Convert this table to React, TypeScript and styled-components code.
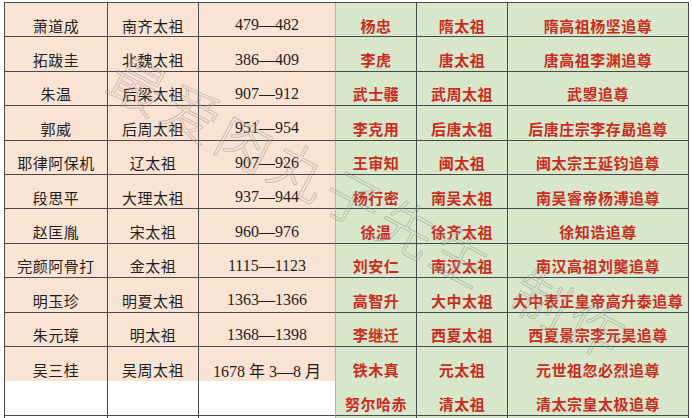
import styled, { createGlobalStyle } from "styled-components";

const GlobalStyle = createGlobalStyle`
  html, body {
    margin: 0;
    padding: 0;
    background: #ffffff;
    overflow: hidden;
  }
`;

interface Row {
  name: string;
  title: string;
  years: string;
  honorName: string;
  honorTitle: string;
  note: string;
}

const rows: (Row | null)[] = [
  { name: "萧道成", title: "南齐太祖", years: "479—482", honorName: "杨忠", honorTitle: "隋太祖", note: "隋高祖杨坚追尊" },
  { name: "拓跋圭", title: "北魏太祖", years: "386—409", honorName: "李虎", honorTitle: "唐太祖", note: "唐高祖李渊追尊" },
  { name: "朱温", title: "后梁太祖", years: "907—912", honorName: "武士彠", honorTitle: "武周太祖", note: "武曌追尊" },
  { name: "郭威", title: "后周太祖", years: "951—954", honorName: "李克用", honorTitle: "后唐太祖", note: "后唐庄宗李存勗追尊" },
  { name: "耶律阿保机", title: "辽太祖", years: "907—926", honorName: "王审知", honorTitle: "闽太祖", note: "闽太宗王延钧追尊" },
  { name: "段思平", title: "大理太祖", years: "937—944", honorName: "杨行密", honorTitle: "南吴太祖", note: "南吴睿帝杨溥追尊" },
  { name: "赵匡胤", title: "宋太祖", years: "960—976", honorName: "徐温", honorTitle: "徐齐太祖", note: "徐知诰追尊" },
  { name: "完颜阿骨打", title: "金太祖", years: "1115—1123", honorName: "刘安仁", honorTitle: "南汉太祖", note: "南汉高祖刘龑追尊" },
  { name: "明玉珍", title: "明夏太祖", years: "1363—1366", honorName: "高智升", honorTitle: "大中太祖", note: "大中表正皇帝高升泰追尊" },
  { name: "朱元璋", title: "明太祖", years: "1368—1398", honorName: "李继迁", honorTitle: "西夏太祖", note: "西夏景宗李元昊追尊" },
  { name: "吴三桂", title: "吴周太祖", years: "1678 年 3—8 月", honorName: "铁木真", honorTitle: "元太祖", note: "元世祖忽必烈追尊" },
  { name: "", title: "", years: "", honorName: "努尔哈赤", honorTitle: "清太祖", note: "清太宗皇太极追尊" },
  null,
];

const App = () => {
  return (
    <Page>
      <GlobalStyle />
      <Sheet>
        {rows.map((row, idx) => {
          const blankLeft = !row || !row.name;
          return (
            <Line key={idx}>
              <Cell $tone={blankLeft ? "blank" : "peach"}>{row?.name}</Cell>
              <Cell $tone={blankLeft ? "blank" : "peach"}>{row?.title}</Cell>
              <Cell $tone={blankLeft ? "blank" : "peach"} $num $soft>
                {row?.years}
              </Cell>
              <Cell $tone="green">{row?.honorName}</Cell>
              <Cell $tone="green">{row?.honorTitle}</Cell>
              <Cell $tone="green">{row?.note}</Cell>
            </Line>
          );
        })}
      </Sheet>
      <Watermark>
        最爱肉丸子先生<Gap />制作
      </Watermark>
    </Page>
  );
};

const Page = styled.div`
  position: relative;
  width: 692px;
  height: 418px;
  overflow: hidden;
  padding: 2px 0 0 4px;
  box-sizing: border-box;
`;

const Sheet = styled.div`
  display: flex;
  flex-direction: column;
  border-top: 1px solid #4a4a4a;
  border-left: 1px solid #4a4a4a;
  width: max-content;
`;

const Line = styled.div`
  display: grid;
  grid-template-columns: 103px 91px 137px 81px 91px 181px;
  height: 34.4px;
`;

const Cell = styled.div<{ $tone: "peach" | "green" | "blank"; $num?: boolean; $soft?: boolean }>`
  display: flex;
  align-items: center;
  justify-content: center;
  padding-top: 11px;
  box-sizing: border-box;
  white-space: nowrap;
  border-bottom: 1px solid #4a4a4a;
  border-right: 1px solid ${(p) => (p.$soft ? "#b9b4a6" : "#4a4a4a")};
  background: ${(p) =>
    p.$tone === "peach" ? "#fbe3d3" : p.$tone === "green" ? "#d8e7c9" : "#ffffff"};
  color: ${(p) => (p.$tone === "green" ? "#c92d1f" : "#1e1e1e")};
  font-weight: ${(p) => (p.$tone === "green" ? 700 : 400)};
  font-family: ${(p) =>
    p.$num
      ? `"Liberation Serif", "Noto Sans CJK SC", serif`
      : `"Noto Sans CJK SC", sans-serif`};
  font-size: ${(p) => (p.$num ? "16px" : "15px")};
  letter-spacing: ${(p) => (p.$num ? "0" : "0.5px")};
`;

const Watermark = styled.div`
  position: absolute;
  left: 370px;
  top: 205px;
  transform: translate(-50%, -50%) rotate(28deg);
  display: flex;
  align-items: center;
  white-space: nowrap;
  font-family: "Noto Sans CJK SC", sans-serif;
  font-size: 56px;
  font-weight: 300;
  letter-spacing: 5px;
  color: rgba(255, 255, 255, 0.1);
  -webkit-text-stroke: 1px rgba(120, 120, 120, 0.38);
  pointer-events: none;
`;

const Gap = styled.span`
  display: inline-block;
  width: 30px;
`;

export default App;
